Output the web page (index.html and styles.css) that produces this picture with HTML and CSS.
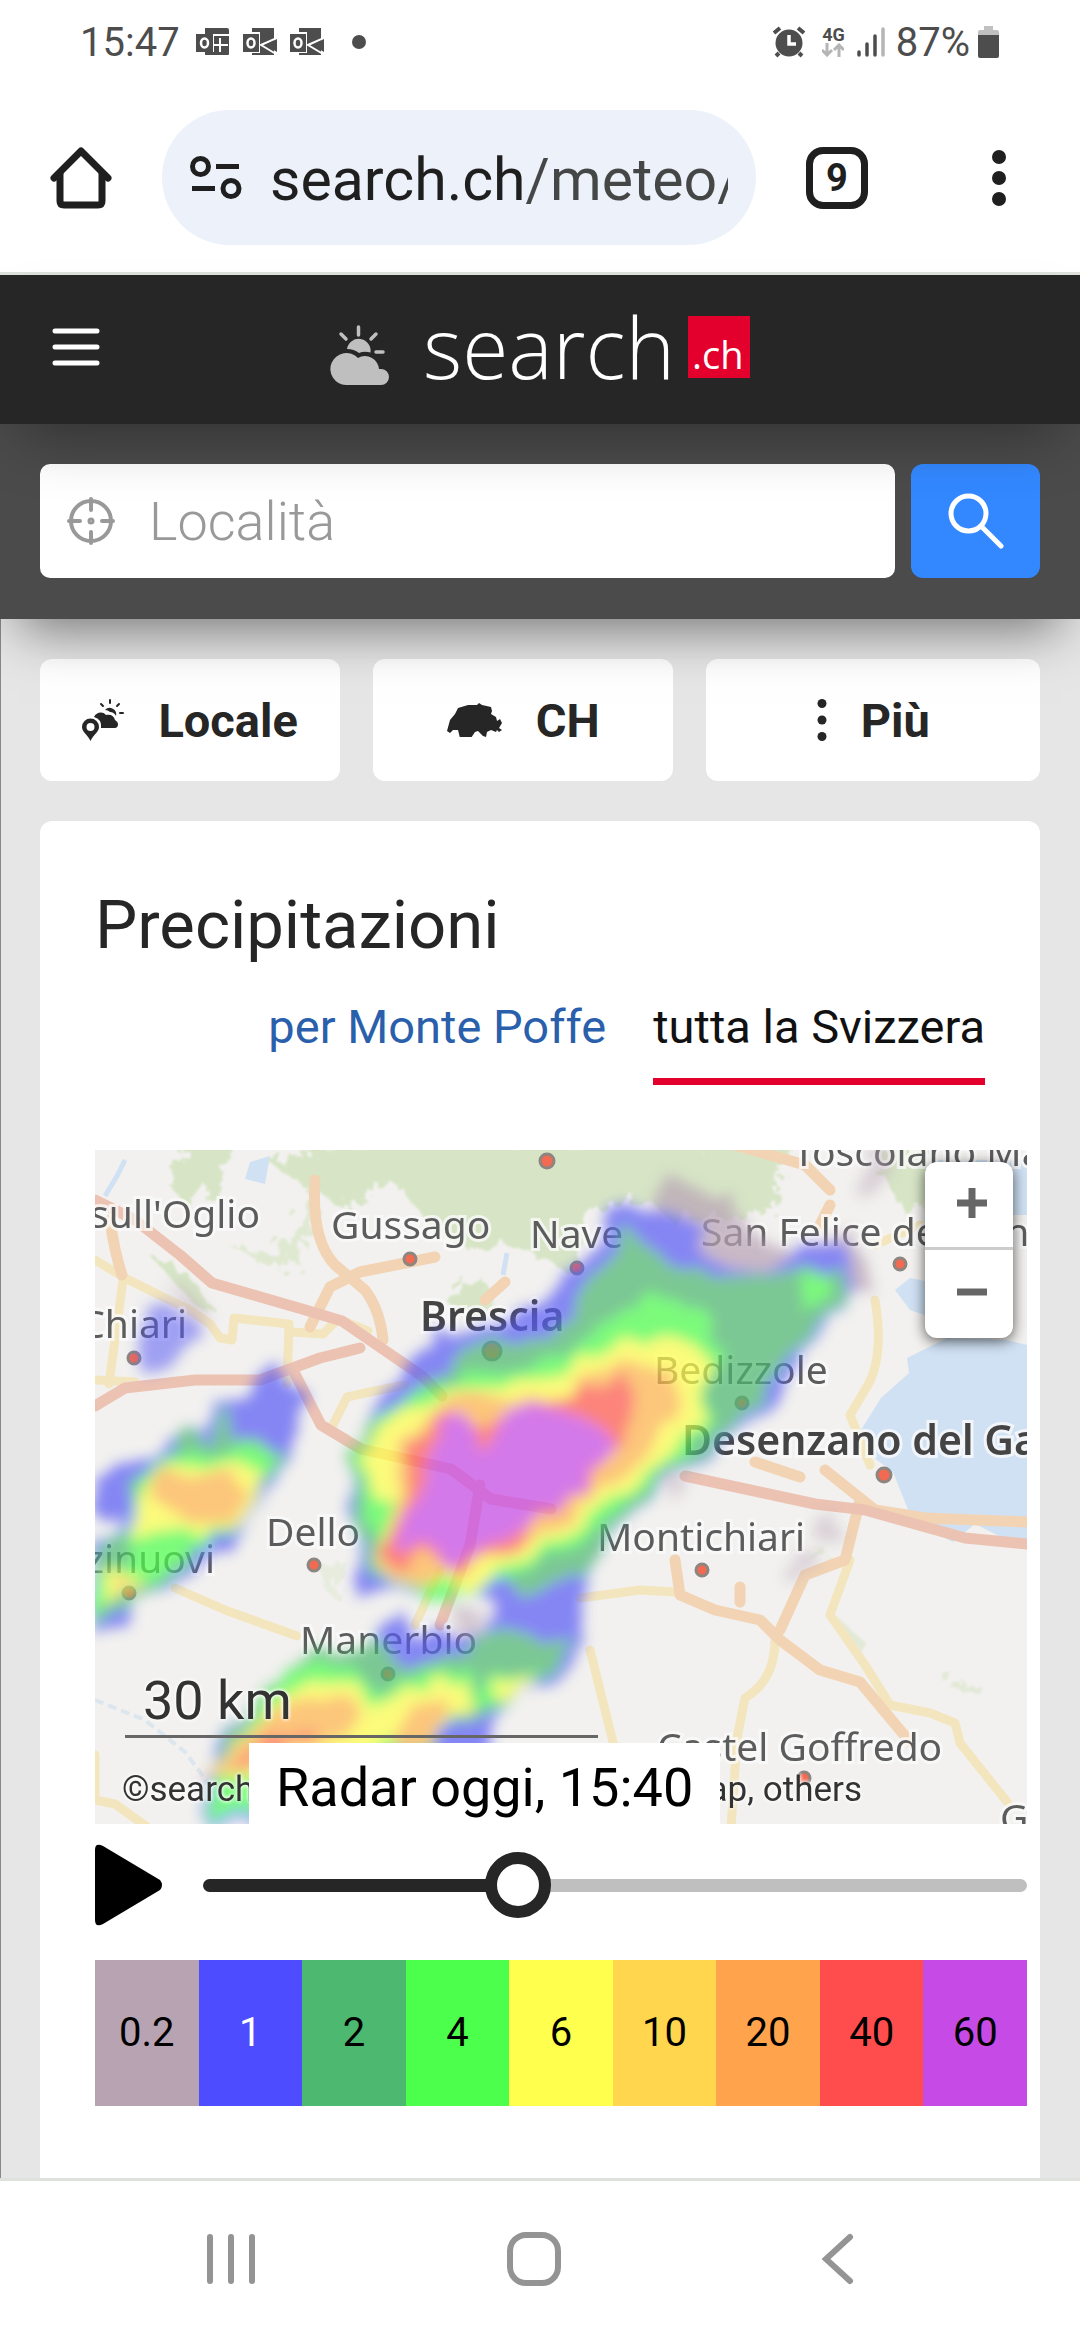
FILE: index.html
```html
<!DOCTYPE html>
<html lang="it">
<head>
    <meta charset="UTF-8">
    <meta name="viewport" content="width=device-width, initial-scale=1.0">
    <title>Precipitazioni - search.ch</title>
    <link rel="stylesheet" href="styles.css">
</head>
<body>
    <!-- status bar -->
    <div class="status-bar">
        <span class="clock">15:47</span>
        <div class="notifications">
            <svg width="34" height="28" viewBox="0 0 34 28"><path d="M9 0h22q2 0 2 2v4H9zM18 8h15v18q0 1-1 1H9v-3h9z" fill="#4d4d4d"/><path d="M0 6h17v18H0z" fill="#4d4d4d"/><ellipse cx="8.500" cy="15" rx="3.500" ry="4.500" fill="none" stroke="#fff" stroke-width="2.500"/><path d="M18 17h14M24 10v14" stroke="#fff" stroke-width="2"/></svg>
            <svg width="34" height="28" viewBox="0 0 34 28"><path d="M9 0h22v27H9z" fill="#4d4d4d"/><path d="M34 10L18 17l15 9M34 10V0h-2v11" stroke="#fff" stroke-width="2" fill="none"/><path d="M34 11v13L22 17z" fill="#4d4d4d"/><path d="M-1 4h18v21H-1z" fill="#fff"/><path d="M0 6h16v18H0z" fill="#4d4d4d"/><ellipse cx="8" cy="15" rx="3.500" ry="4.500" fill="none" stroke="#fff" stroke-width="2.500"/></svg>
            <svg width="34" height="28" viewBox="0 0 34 28"><path d="M9 0h22v27H9z" fill="#4d4d4d"/><path d="M34 10L18 17l15 9M34 10V0h-2v11" stroke="#fff" stroke-width="2" fill="none"/><path d="M34 11v13L22 17z" fill="#4d4d4d"/><path d="M-1 4h18v21H-1z" fill="#fff"/><path d="M0 6h16v18H0z" fill="#4d4d4d"/><ellipse cx="8" cy="15" rx="3.500" ry="4.500" fill="none" stroke="#fff" stroke-width="2.500"/></svg>
        </div>
        <span class="more-dot"></span>
        <div class="phone-state">
            <svg class="alarm" width="34" height="32" viewBox="0 0 34 32"><circle cx="17" cy="17" r="13.500" fill="#4d4d4d"/><path d="M2 7l6-5M32 7l-6-5M7 27l-3 3M27 27l3 3" stroke="#4d4d4d" stroke-width="4"/><path d="M17 9v9h7" fill="none" stroke="#fff" stroke-width="3.500"/></svg>
            <div class="network">
                <span>4G</span>
                <svg width="22" height="14" viewBox="0 0 22 14"><path d="M5 0v12M0 7l5 5 5-5M17 14V2M12 7l5-5 5 5" fill="none" stroke="#b5b5b5" stroke-width="3"/></svg>
            </div>
            <svg width="28" height="30" viewBox="0 0 28 30" stroke-width="3.500" stroke-linecap="round"><path d="M2 25v3M10 17v11M18 9v19" stroke="#4d4d4d"/><path d="M26 2v26" stroke="#b5b5b5"/></svg>
            <span class="battery-text">87%</span>
            <svg width="22" height="32" viewBox="0 0 22 32"><path d="M6 0h9v4h4q2 0 2 2v4H0V6q0-2 2-2h4z" fill="#c0c0c0"/><path d="M0 9h21v21q0 2-2 2H2q-2 0-2-2z" fill="#4d4d4d"/></svg>
        </div>
    </div>

    <!-- browser toolbar -->
    <div class="toolbar">
        <button class="icon-button" type="button" aria-label="Home">
            <svg width="62" height="62" viewBox="0 0 62 62" fill="none" stroke="#1f1f1f" stroke-width="7" stroke-linecap="round" stroke-linejoin="round"><path d="M4 31L31 4l27 27"/><path d="M10 26v28q0 4 4 4h34q4 0 4-4V26"/></svg>
        </button>
        <div class="address">
            <svg width="52" height="44" viewBox="0 0 52 44" fill="none" stroke="#1f1f1f" stroke-width="5"><circle cx="10.500" cy="10.500" r="8"/><path d="M26 10.500h23M2 32.500h23"/><circle cx="41" cy="32.500" r="8"/></svg>
            <input type="text" value="search.ch/meteo/" aria-label="Indirizzo">
        </div>
        <button class="tab-count" type="button">9</button>
        <button class="icon-button menu-button" type="button" aria-label="Menu">
            <svg width="14" height="56" viewBox="0 0 14 56" fill="#1f1f1f"><circle cx="7" cy="7" r="7"/><circle cx="7" cy="28" r="7"/><circle cx="7" cy="49" r="7"/></svg>
        </button>
    </div>

    <!-- site -->
    <div class="site">
        <header class="site-header">
            <button class="icon-button hamburger" type="button" aria-label="Menu del sito">
                <svg width="48" height="38" viewBox="0 0 48 38" stroke="#fff" stroke-width="5" stroke-linecap="round"><path d="M3 3h42M3 19h42M3 35h42"/></svg>
            </button>
            <a class="logo" href="#">
                <svg width="59" height="60" viewBox="0 0 59 60"><path d="M28.500 2v8M11 9l5 5M46 9l-5 5M46 27h7" stroke="#bfbfbf" stroke-width="3.500" stroke-linecap="round"/><path d="M17 24a11.500 11.500 0 0 1 23.500 3.500Q34 26 29 28q-5-4-12-4z" fill="#bfbfbf"/><path d="M16 60A16 16 0 1 1 28 33a14 14 0 0 1 21 11h2a8 8 0 0 1 0 16z" fill="#bfbfbf"/></svg>
                <span class="logo-word">search</span>
                <span class="logo-ch">.ch</span>
            </a>
        </header>

        <form class="search-band">
            <div class="search-field">
                <svg width="48" height="48" viewBox="0 0 48 48" fill="none" stroke="#999" stroke-width="4" stroke-linecap="round"><circle cx="24" cy="24" r="20"/><path d="M24 2v11M24 35v11M2 24h11M35 24h11"/><circle cx="24" cy="24" r="1.500"/></svg>
                <input type="text" placeholder="Località" aria-label="Località">
            </div>
            <button class="search-button" type="button" aria-label="Cerca">
                <svg width="56" height="56" viewBox="0 0 56 56" fill="none" stroke="#fff" stroke-width="5" stroke-linecap="round"><circle cx="20.500" cy="20.500" r="17.500"/><path d="M33 33l20 20"/></svg>
            </button>
        </form>

        <main class="content">
            <nav class="shortcuts">
                <a class="shortcut" href="#">
                    <svg width="42" height="42" viewBox="0 0 42 42" fill="#262626"><path d="M28 1v3M19 5l2 2M37 5l-2 2M38 14h3" stroke="#262626" stroke-width="2" stroke-linecap="round"/><path d="M23 11a6.500 6.500 0 0 1 11 6q-2-4-6-4-2-2-5-2z"/><path d="M12 18c2-5 9-6 12-2 5-1 8 1 9 5 5 3 3 8 0 8H19q1-9-7-11z"/><path d="M8.500 42C5 35 0 33 0 28a8.500 8.500 0 0 1 17 0c0 5-5 7-8.500 14zm0-18a4 4 0 1 0 0 8 4 4 0 0 0 0-8z" fill-rule="evenodd"/></svg>
                    Locale
                </a>
                <a class="shortcut" href="#">
                    <svg width="55" height="34" viewBox="0 0 55 34" fill="#262626"><path d="M0 28l3-11 5-6 3-6 10-3 9 0 2-2 3 2 9 2 1 4-1 3 5 3 1 4 3-2 2 4-3 5 3 2-3 2-2-2-1 2-5-2-4 2-1 5-3-1-5-5-3 1-4 6-6-1-5 1-2-8-5 0-3 3z"/></svg>
                    CH
                </a>
                <button class="shortcut" type="button">
                    <svg width="10" height="42" viewBox="0 0 10 42" fill="#262626"><circle cx="5" cy="4.500" r="4.500"/><circle cx="5" cy="21" r="4.500"/><circle cx="5" cy="37.500" r="4.500"/></svg>
                    Più
                </button>
            </nav>

            <section class="panel">
                <h1>Precipitazioni</h1>
                <div class="tabs">
                    <a href="#">per Monte Poffe</a>
                    <a class="active" href="#">tutta la Svizzera</a>
                </div>

                <div class="map">
                    <svg class="map-canvas" viewBox="0 0 932 674">
                        <defs>
                            <filter id="rough" x="-10%" y="-10%" width="120%" height="120%">
                                <feTurbulence type="fractalNoise" baseFrequency="0.07" numOctaves="3" seed="4"/>
                                <feDisplacementMap in="SourceGraphic" scale="36"/>
                                <feGaussianBlur stdDeviation="1"/>
                            </filter>
                            <filter id="soft" filterUnits="userSpaceOnUse" x="-60" y="-60" width="1060" height="800">
                                <feTurbulence type="fractalNoise" baseFrequency="0.025" numOctaves="2" seed="9"/>
                                <feDisplacementMap in="SourceGraphic" scale="36" xChannelSelector="R" yChannelSelector="G"/>
                                <feGaussianBlur stdDeviation="7"/>
                            </filter>
                        </defs>
                        <rect width="932" height="674" fill="#f2f1ef"/>

                        <!-- woods -->
                        <g fill="#d7e5c6" filter="url(#rough)">
                            <path d="M85-10h50l-10 45-35 20-15-20z"/>
                            <path d="M175 15l60-25h460l-20 40-40 40-60 0-20-20-60 10-20 60-70-30-30 10-40-20-25-40-30-5-30 25z"/>
                            <path d="M600 0h90l-10 60-70 10z"/>
                            <path d="M775-10h60v60l-20 20-20-30z"/>
                            <path d="M360 135l30-5 10 25-15 20-25-15zM55 105l40 20 25 35-20-5z"/>
                            <path d="M130 92l40 14 30-20 12-50 8 0-8 65-30 20z" opacity=".7"/>
                            <path d="M225 415l25-5-8 40-12-10z" opacity=".4"/>
                            <path d="M738 465l30 25-8 8zM855 530l35 8-2 6-33-6zM720 385l12 20-10 10z" opacity=".6"/>
                        </g>

                        <!-- water -->
                        <g fill="#d0e1f4">
                            <path d="M932 195l-20-5-60-2-40 20 2 15-28 25-20 32-8 12 40 30 20 50 40 20 22-18 24 12 28 8zM815 128l20 4v35l-20-7-15-20z"/>
                            <path d="M842 10h90v55h-70zM155 12l20-6-5 28-20-5z"/>
                            <path d="M10 46l12-20 8-16M412 103l-4 22" fill="none" stroke="#d0e1f4" stroke-width="5"/>
                            <path d="M0 550l50 20 40 32 30 40" fill="none" stroke="#dbe6ef" stroke-width="4" stroke-dasharray="9 5"/>
                        </g>

                        <!-- roads -->
                        <g fill="none" stroke-linejoin="round" stroke-linecap="round">
                            <g stroke="#f3e6be" stroke-width="9">
                                <path d="M0 110l30 18 40 20 25 12 20 14 10 14 12 2 2-22 55 6-2 60M198 182l30 2 15-15 30 12M28 130L14 234M310 235l-40 8-18 4-15 30"/>
                                <path d="M0 230l40 2M80 438l50 22 72 26M320 475l25-55M0 650l20 4 35 25"/>
                                <path d="M780 150q10 60-10 90l-15 25 20 50M485 448l60-8 35 2M755 410l-20 55 35 50 25 40 40 8 25 10 5 20 48 60M680 490q0 40-30 58l-8 40-6 90M495 500l30 120"/>
                                <path d="M0 605v40M780 95l45-20"/>
                            </g>
                            <g stroke="#f2d4b4" stroke-width="11">
                                <path d="M220 30q-4 60 20 85l30 25q15 20 18 50M340 107l-75 15-30 15-20 40"/>
                                <path d="M15 70q4 30 12 55M390 150l20-18M580 410l5 35 35 15 45 10 20 20 40 30 40 12 50 60"/>
                                <path d="M645 452l0-15M685 480l25-55 40-15 15-60M660 312l45 15M730 320l50 40 50 8 102 4"/>
                                <path d="M640-5l70 20 25 25M725 75l10-20"/>
                            </g>
                            <g stroke="#ecc3b3" stroke-width="11">
                                <path d="M0 50l40 20 45 35 32 28 90 26 40 12 80 55 20 20M0 256l30-18 70-8 65 0 60-22 40-10M198 220l28 55 40 24 90 20 40 30 60 10"/>
                                <path d="M590 326l130 28 50 6 100 28 62 6M345 475l30-80 10-60"/>
                            </g>
                        </g>

                        <!-- places -->
                        <g class="places">
                            <text x="165" y="78" text-anchor="end">sull'Oglio</text>
                            <text x="236" y="89">Gussago</text>
                            <text x="435" y="98">Nave</text>
                            <text x="92" y="188" text-anchor="end">Chiari</text>
                            <text class="town" x="325" y="181">Brescia</text>
                            <text x="698" y="16">Toscolano Maderno</text>
                            <text x="606" y="96">San Felice del Benaco</text>
                            <text x="559" y="234">Bedizzole</text>
                            <text class="town" x="587" y="305">Desenzano del Garda</text>
                            <text x="171" y="396">Dello</text>
                            <text x="120" y="423" text-anchor="end">Orzinuovi</text>
                            <text x="502" y="401">Montichiari</text>
                            <text x="205" y="504">Manerbio</text>
                            <text x="562" y="611">Castel Goffredo</text>
                            <text x="905" y="682">Guidizzolo</text>
                        </g>
                        <g fill="#f26a52" stroke="#8d8580" stroke-width="3">
                            <circle cx="452" cy="11" r="7"/>
                            <circle cx="315" cy="109" r="6"/>
                            <circle cx="482" cy="118" r="6"/>
                            <circle cx="39" cy="208" r="6"/>
                            <circle cx="397" cy="201" r="9"/>
                            <circle cx="805" cy="114" r="6"/>
                            <circle cx="647" cy="253" r="6"/>
                            <circle cx="789" cy="325" r="7"/>
                            <circle cx="219" cy="415" r="6"/>
                            <circle cx="34" cy="443" r="6"/>
                            <circle cx="607" cy="420" r="6"/>
                            <circle cx="293" cy="524" r="6"/>
                            <circle cx="709" cy="628" r="6"/>
                        </g>

                        <!-- radar echoes, weakest first -->
                        <g filter="url(#soft)" opacity=".72">
                            <g fill="#b8a3b5">
                                <path d="M565 35l70 5 15 45 50 20 60-25 15 60-60 10-120-10-40-60z"/>
                                <path d="M765-10h25l-5 60h-20zM725 365h22v22h-22zM690 405l30-5 5 20h-30zM570 320l25 10-15 15zM70 135l40 10-5 30z" opacity=".6"/>
                                <path d="M400 440l80 0v30l-60 20zM350 455l45 0 0 30-30 0z" opacity=".7"/>
                            </g>
                            <g fill="#5a5cf5">
                                <path d="M555 53l28 8 30 14-5 30 55 22 45-25 48-8 0 47-38 52-35 58-42 28-32 28-52 34-20 25-40 44-15 34 7 50-14 28-12 18-48 12-15 20-8 34-130 70H112l-5-45 12-30 55-62 32-22 75-20 10-25 22-5 5 20 48 0 30-4 4-38-20-12-60 10-32-3-18 3-6-22 4-36-14-30 2-40 12-48 32-34 18-24 22-26h25l36-8 40-22 36-34 24-32 10-30z"/>
                                <path d="M185 220l18 20 2 45-25 40-14 22-30 42-60 44-40 20-4 26-35 6V395l28-5 5-25-35-4v-22l45-30 30-20 38-6 8-30 34-10z"/>
                                <path d="M45 155l45 5 12 25-12 22-40 4-10-26z" opacity=".75"/>
                            </g>
                            <g fill="#4db870">
                                <path d="M530 80L555 98 600 118 640 132 690 125 705 118 745 120 748 150 715 190 690 215 668 240 640 275 600 308 560 335 530 370 500 405 478 440 430 445 400 425 360 440 335 445 280 428 270 395 258 340 255 300 265 270 285 265 312 245 340 222 390 195 450 190 475 168 498 130z"/>
                                <path d="M85 285L118 288 122 255 140 260 145 290 192 298 165 335 150 362 125 390 85 412 50 445 0 475 0 400 40 385 38 345 60 305z"/>
                                <path d="M180 525l40-20 65-8 30 20 50-15 40-25 20 10 55 0-15 35-40 30-30 10-55 20-20 80H115v-50l40-50z"/>
                            </g>
                            <g fill="#4eff4e">
                                <path d="M560 150L590 148 622 180 630 205 615 250 600 297 565 322 530 348 510 380 470 402 430 422 395 432 350 442 290 428 280 390 268 350 260 300 285 270 330 238 375 225 400 215 450 208 490 195 520 172z"/>
                                <path d="M705 125l25 0 0 26-22 6zM330 440l25 0-5 16-15 0z"/>
                                <path d="M80 298L120 302 150 298 178 302 160 335 140 372 115 395 75 405 40 432 0 458 0 430 35 405 40 360 60 312z"/>
                                <path d="M190 520l70-5 20 20 80-12 10-10 10 30 20-15 50-8-25 30-50 5-20 20-50 20-30 70H120l-5-50 30-25z"/>
                            </g>
                            <g fill="#ffff4e">
                                <path d="M540 192L600 192 618 215 605 260 590 290 555 315 520 340 490 375 445 400 420 415 385 432 340 436 290 425 285 390 300 345 275 340 268 305 285 282 320 255 350 240 385 245 420 230 455 225 500 200z"/>
                                <path d="M75 312L100 318 145 312 165 325 145 365 115 388 80 385 40 388 48 348zM8 425l34-5-5 22-24 3z"/>
                                <path d="M205 535l55-10 15 30 45-18 50-8 10 24-30 20-50 20-70 20-100 22-10-25 45-30zM405 535l35-8 10 8-20 12-25 3z"/>
                            </g>
                            <g fill="#ffb64e">
                                <path d="M350 245L390 250 420 250 470 245 500 220 550 215 580 225 582 262 545 300 505 340 470 375 425 392 385 420 340 436 292 425 285 400 290 360 305 325 318 285z"/>
                                <path d="M68 318L95 325 130 322 150 325 130 375 100 380 60 350zM18 428h16v10H18z"/>
                                <path d="M100 625L165 582 205 548 255 543 270 572 235 590 160 602 130 630zM318 555l36-10 0 22-34 30-14-6z"/>
                            </g>
                            <g fill="#ff5a4e">
                                <path d="M348 255L385 275 425 262 490 238 530 228 542 250 520 290 505 330 470 352 440 368 400 405 360 430 320 402 300 415 285 398 305 350 325 290z"/>
                                <path d="M178 585l40-12 0 16-50 16-26 24-16-4z" opacity=".8"/>
                                <path d="M400 375l34 4-10 20-20 6z" opacity=".8"/>
                            </g>
                            <g fill="#c84ce6">
                                <path d="M345 270L372 266 384 300 396 300 408 266 450 258 490 260 512 275 515 302 495 332 470 348 430 370 402 388 378 412 355 428 335 402 305 388 303 365 330 350 330 310z"/>
                            </g>
                        </g>
                    </svg>

                    <div class="scale">30 km</div>
                    <div class="credits"><span>©search.ch, TomTom,</span> <span>OpenStreetMap, others</span></div>
                    <div class="map-time">Radar oggi, 15:40</div>
                    <div class="zoom">
                        <button type="button" aria-label="Ingrandisci"><svg width="30" height="30" viewBox="0 0 30 30"><path d="M15 0v30M0 15h30" stroke="#666" stroke-width="7"/></svg></button>
                        <button type="button" aria-label="Riduci"><svg width="30" height="30" viewBox="0 0 30 30"><path d="M0 15h30" stroke="#666" stroke-width="7"/></svg></button>
                    </div>
                </div>

                <div class="player">
                    <button class="icon-button" type="button" aria-label="Riproduci">
                        <svg width="67" height="82" viewBox="0 0 67 82"><path d="M0 6q0-8 8-4l57 34q4 5 0 10L8 80q-8 4-8-4z"/></svg>
                    </button>
                    <input class="timeline" type="range" min="0" max="1000" value="372" aria-label="Ora">
                </div>

                <ul class="legend">
                    <li class="mm-02">0.2</li>
                    <li class="mm-1">1</li>
                    <li class="mm-2">2</li>
                    <li class="mm-4">4</li>
                    <li class="mm-6">6</li>
                    <li class="mm-10">10</li>
                    <li class="mm-20">20</li>
                    <li class="mm-40">40</li>
                    <li class="mm-60">60</li>
                </ul>
            </section>
        </main>
    </div>

    <!-- system navigation -->
    <div class="system-nav">
        <button class="icon-button" type="button" aria-label="Recenti"><svg width="50" height="54" viewBox="0 0 50 54" stroke="#949494" stroke-width="6" stroke-linecap="round"><path d="M4 5v44M25 5v44M46 5v44"/></svg></button>
        <button class="icon-button" type="button" aria-label="Schermata principale"><svg width="54" height="54" viewBox="0 0 54 54"><rect x="3" y="3" width="48" height="48" rx="16" fill="none" stroke="#949494" stroke-width="6"/></svg></button>
        <button class="icon-button" type="button" aria-label="Indietro"><svg width="50" height="54" viewBox="0 0 50 54"><path d="M38 5L14 27l24 22" fill="none" stroke="#949494" stroke-width="6" stroke-linecap="round"/></svg></button>
    </div>
</body>
</html>
```

FILE: styles.css
```css
* {
    box-sizing: border-box;
}

body {
    font-family: Roboto, 'Liberation Sans', sans-serif;
    margin: 0;
    min-height: 100vh;
    display: flex;
    flex-direction: column;
    background-color: #fff;
    color: #262626;
}

svg {
    display: block;
    flex: none;
}

a {
    color: inherit;
    text-decoration: none;
}

button,
input {
    font-family: inherit;
    margin: 0;
    padding: 0;
    border: none;
}

.icon-button {
    background: none;
    cursor: pointer;
}

/* status bar */
.status-bar {
    display: flex;
    align-items: center;
    height: 84px;
    padding: 0 80px;
    font-size: 40px;
    color: #4d4d4d;
}

.notifications {
    display: flex;
    gap: 13px;
    margin-left: 16px;
}

.more-dot {
    width: 14px;
    height: 14px;
    margin-left: 28px;
    border-radius: 50%;
    background-color: #4d4d4d;
}

.phone-state {
    display: flex;
    align-items: center;
    gap: 8px;
    margin-left: auto;
}

.alarm {
    margin-right: 8px;
}

.network {
    margin-right: 4px;
    font-size: 18px;
    font-weight: 700;
    line-height: 16px;
}

.battery-text {
    margin-left: 3px;
}

/* browser toolbar */
.toolbar {
    display: flex;
    align-items: center;
    padding: 26px 74px 27px 50px;
    border-bottom: 3px solid #dfe1dd;
}

.address {
    flex: 1;
    min-width: 0;
    display: flex;
    align-items: center;
    gap: 28px;
    height: 135px;
    margin: 0 50px;
    padding: 0 28px;
    border-radius: 68px;
    background-color: #ecf1fa;
}

/* host part darker than the path */
.address input {
    flex: 1;
    min-width: 0;
    padding-top: 4px;
    font-size: 59px;
    background: linear-gradient(to right, #1f1f1f 257px, #454746 257px);
    -webkit-background-clip: text;
    background-clip: text;
    color: transparent;
    outline: none;
}

.tab-count {
    width: 62px;
    height: 62px;
    border: 7px solid #1f1f1f;
    border-radius: 17px;
    background: none;
    font-size: 38px;
    font-weight: 700;
    line-height: 48px;
    color: #1f1f1f;
}

.menu-button {
    margin-left: 124px;
}

/* site */
.site {
    flex: 1;
    display: flex;
    flex-direction: column;
    background-color: #e6e6e6;
}

.site-header {
    position: relative;
    z-index: 2;
    display: grid;
    grid-template-columns: 1fr auto 1fr;
    align-items: center;
    height: 149px;
    padding: 0 52px 6px;
    background-color: #262626;
    box-shadow: 0 30px 60px -20px rgba(0, 0, 0, 0.35);
}

.hamburger {
    justify-self: start;
}

.logo {
    display: flex;
    align-items: flex-end;
    color: #fff;
    font-family: 'Open Sans', 'Noto Sans', sans-serif;
}

.logo svg {
    position: relative;
    top: 7px;
}

.logo-word {
    margin: 0 13px 0 34px;
    font-size: 84px;
    font-weight: 300;
    line-height: 62px;
}

.logo-ch {
    width: 62px;
    height: 62px;
    padding: 16px 0 0 4px;
    background-color: #e3002c;
    font-size: 38px;
    line-height: 44px;
}

.search-band {
    position: relative;
    z-index: 1;
    display: flex;
    gap: 16px;
    padding: 40px 40px 41px;
    background-color: #4b4b4b;
    box-shadow: 0 30px 50px -20px rgba(0, 0, 0, 0.5);
}

.search-field {
    flex: 1;
    min-width: 0;
    display: flex;
    align-items: center;
    gap: 34px;
    height: 114px;
    padding: 0 27px;
    border-radius: 10px;
    background-color: #fff;
}

.search-field input {
    flex: 1;
    min-width: 0;
    font-size: 54px;
    font-weight: 300;
    background: none;
    outline: none;
}

.search-field input::placeholder {
    color: #999;
}

.search-button {
    display: flex;
    align-items: center;
    justify-content: center;
    width: 129px;
    border-radius: 12px;
    background-color: #3388ff;
    cursor: pointer;
}

.content {
    flex: 1;
    display: flex;
    flex-direction: column;
    gap: 40px;
    padding: 40px 40px 0 39px;
    border-left: 1px solid #888;
}

.shortcuts {
    display: grid;
    grid-template-columns: 9fr 9fr 10fr;
    gap: 33px;
}

.shortcut {
    display: flex;
    align-items: center;
    justify-content: center;
    gap: 34px;
    height: 122px;
    border-radius: 12px;
    background-color: #fff;
    color: #262626;
    font-size: 47px;
    font-weight: 700;
    cursor: pointer;
}

.panel {
    flex: 1;
    padding: 65px 13px 72px 55px;
    border-radius: 12px 12px 0 0;
    background-color: #fff;
}

.panel h1 {
    margin: 0 0 35px;
    font-size: 67px;
    font-weight: 400;
    line-height: 78px;
}

.tabs {
    display: flex;
    justify-content: flex-end;
    gap: 47px;
    margin-bottom: 65px;
    padding-right: 42px;
    font-size: 47px;
    line-height: 56px;
}

.tabs a {
    padding-bottom: 23px;
    border-bottom: 7px solid transparent;
    color: #2a5fac;
}

.tabs .active {
    border-bottom-color: #e3002c;
    color: #111;
}

/* map */
.map {
    position: relative;
    overflow: hidden;
}

.map-canvas {
    width: 100%;
    height: auto;
}

.places {
    font-family: 'Noto Sans', 'Open Sans', sans-serif;
    font-size: 39px;
    fill: #5c5c5c;
    stroke: rgba(250, 250, 250, 0.8);
    stroke-width: 6px;
    paint-order: stroke;
}

.places .town {
    font-size: 41px;
    font-weight: 600;
    fill: #444;
}

.scale {
    position: absolute;
    left: 30px;
    bottom: 86px;
    width: 473px;
    padding-left: 18px;
    border-bottom: 3px solid #666;
    font-size: 54px;
    line-height: 68px;
    color: #333;
    text-shadow: 0 0 4px #fff, 0 0 4px #fff;
}

.credits {
    position: absolute;
    left: 27px;
    bottom: 13px;
    width: 740px;
    display: flex;
    justify-content: space-between;
    font-size: 35px;
    line-height: 42px;
    color: #333;
    text-shadow: 0 0 4px #fff, 0 0 4px #fff;
}

.map-time {
    position: absolute;
    left: 154px;
    bottom: 0;
    padding: 8px 27px 0;
    background-color: #fff;
    color: #000;
    font-size: 54px;
    line-height: 73px;
}

.zoom {
    position: absolute;
    top: 12px;
    right: 14px;
    width: 88px;
    border-radius: 12px;
    background-color: #fff;
    box-shadow: 0 3px 14px rgba(0, 0, 0, 0.65);
}

.zoom button {
    display: flex;
    align-items: center;
    justify-content: center;
    width: 100%;
    height: 88px;
    padding: 0 0 4px 6px;
    background: none;
    cursor: pointer;
}

.zoom button:first-child {
    border-bottom: 3px solid #ccc;
}

/* player */
.player {
    display: flex;
    align-items: center;
    gap: 41px;
    margin: 20px 0 34px;
}

.timeline {
    -webkit-appearance: none;
    appearance: none;
    flex: 1;
    min-width: 0;
    height: 66px;
    background: none;
}

.timeline::-webkit-slider-runnable-track {
    height: 13px;
    border-radius: 7px;
    background: linear-gradient(to right, #262626 38%, #bfbfbf 38%);
}

.timeline::-webkit-slider-thumb {
    -webkit-appearance: none;
    width: 66px;
    height: 66px;
    margin-top: -27px;
    border: 12px solid #262626;
    border-radius: 50%;
    background-color: #fff;
}

.legend {
    display: grid;
    grid-template-columns: repeat(9, 1fr);
    margin: 0;
    padding: 0;
    list-style: none;
    color: #000;
    font-size: 40px;
    line-height: 146px;
    text-align: center;
}

.mm-02 { background-color: #b8a3b3; }
.mm-1 { background-color: #4d4dff; color: #fff; }
.mm-2 { background-color: #4db870; }
.mm-4 { background-color: #4dff4d; }
.mm-6 { background-color: #ffff4d; }
.mm-10 { background-color: #ffd64d; }
.mm-20 { background-color: #ffa34d; }
.mm-40 { background-color: #ff4d4d; }
.mm-60 { background-color: #c64be6; }

/* system navigation */
.system-nav {
    display: flex;
    justify-content: center;
    gap: 251px;
    padding: 51px 12px 54px 0;
    border-top: 3px solid #dfe1dd;
}
```
